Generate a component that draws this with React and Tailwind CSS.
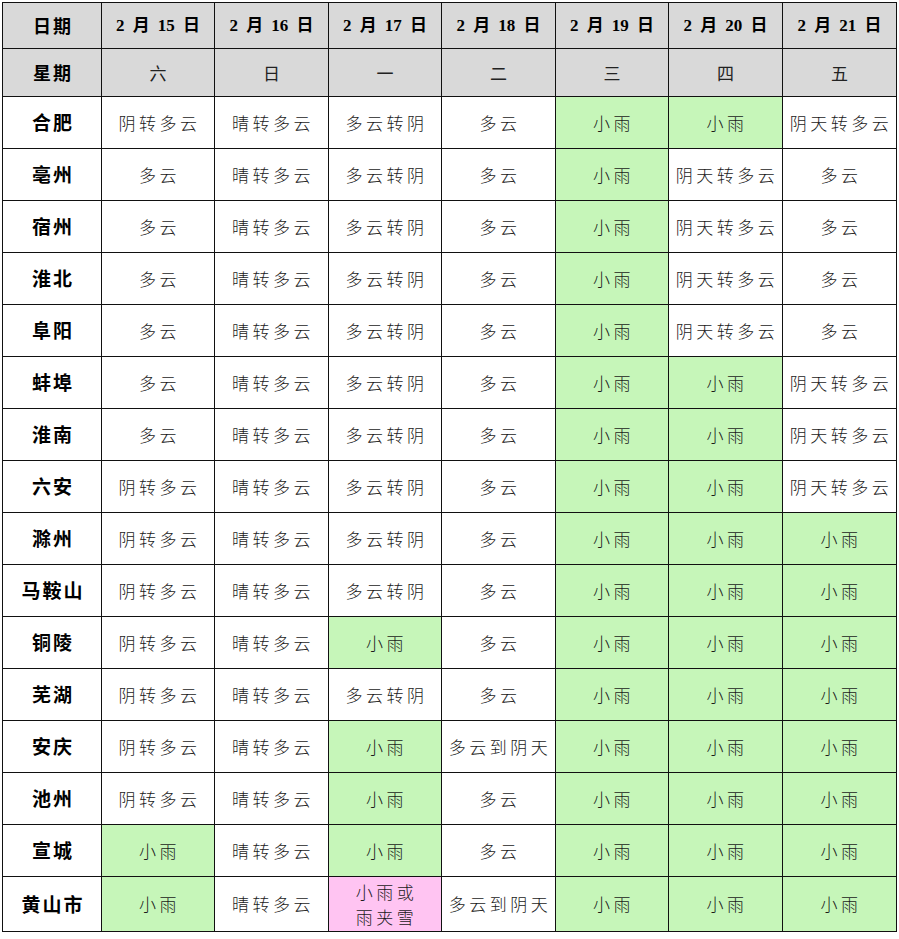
import React from "react";

const G = "g";
const P = "p";
const rows = [
  ["合肥", "阴转多云", "晴转多云", "多云转阴", "多云", ["小雨", G], ["小雨", G], "阴天转多云"],
  ["亳州", "多云", "晴转多云", "多云转阴", "多云", ["小雨", G], "阴天转多云", "多云"],
  ["宿州", "多云", "晴转多云", "多云转阴", "多云", ["小雨", G], "阴天转多云", "多云"],
  ["淮北", "多云", "晴转多云", "多云转阴", "多云", ["小雨", G], "阴天转多云", "多云"],
  ["阜阳", "多云", "晴转多云", "多云转阴", "多云", ["小雨", G], "阴天转多云", "多云"],
  ["蚌埠", "多云", "晴转多云", "多云转阴", "多云", ["小雨", G], ["小雨", G], "阴天转多云"],
  ["淮南", "多云", "晴转多云", "多云转阴", "多云", ["小雨", G], ["小雨", G], "阴天转多云"],
  ["六安", "阴转多云", "晴转多云", "多云转阴", "多云", ["小雨", G], ["小雨", G], "阴天转多云"],
  ["滁州", "阴转多云", "晴转多云", "多云转阴", "多云", ["小雨", G], ["小雨", G], ["小雨", G]],
  ["马鞍山", "阴转多云", "晴转多云", "多云转阴", "多云", ["小雨", G], ["小雨", G], ["小雨", G]],
  ["铜陵", "阴转多云", "晴转多云", ["小雨", G], "多云", ["小雨", G], ["小雨", G], ["小雨", G]],
  ["芜湖", "阴转多云", "晴转多云", "多云转阴", "多云", ["小雨", G], ["小雨", G], ["小雨", G]],
  ["安庆", "阴转多云", "晴转多云", ["小雨", G], "多云到阴天", ["小雨", G], ["小雨", G], ["小雨", G]],
  ["池州", "阴转多云", "晴转多云", ["小雨", G], "多云", ["小雨", G], ["小雨", G], ["小雨", G]],
  ["宣城", ["小雨", G], "晴转多云", ["小雨", G], "多云", ["小雨", G], ["小雨", G], ["小雨", G]],
  ["黄山市", ["小雨", G], "晴转多云", [["小雨或", "雨夹雪"], P], "多云到阴天", ["小雨", G], ["小雨", G], ["小雨", G]],
];

const dates = ["2 月 15 日", "2 月 16 日", "2 月 17 日", "2 月 18 日", "2 月 19 日", "2 月 20 日", "2 月 21 日"];
const days = ["六", "日", "一", "二", "三", "四", "五"];

const serif = { fontFamily: '"Liberation Serif", "Noto Sans CJK SC", serif' };
const sans = { fontFamily: '"Noto Sans CJK SC", sans-serif' };

export default function App() {
  return (
    <div className="bg-white w-[899px] h-[939px] pt-[2px] pl-[2px]">
      <table className="border-collapse table-fixed w-[894px] text-black" style={serif}>
        <colgroup>
          <col className="w-[99px]" />
          <col className="w-[113px]" />
          <col className="w-[114px]" />
          <col className="w-[113px]" />
          <col className="w-[114px]" />
          <col className="w-[113px]" />
          <col className="w-[114px]" />
          <col className="w-[114px]" />
        </colgroup>
        <tbody>
          <tr className="h-[46px] bg-[#d9d9d9]">
            <td className="border border-[#111] text-center font-bold text-[18px] tracking-[2px] pl-[2px]" style={sans}>日期</td>
            {dates.map((d) => (
              <td key={d} className="border border-[#111] text-center font-bold text-[17px] whitespace-pre [word-spacing:4px]" style={serif}>
                {d}
              </td>
            ))}
          </tr>
          <tr className="h-[48px] bg-[#d9d9d9]">
            <td className="border border-[#111] text-center font-bold text-[18px] tracking-[2px] pl-[2px]" style={sans}>星期</td>
            {days.map((d) => (
              <td key={d} className="border border-[#111] text-center text-[17px] text-[#222]" style={sans}>
                {d}
              </td>
            ))}
          </tr>
          {rows.map((r, i) => (
            <tr key={i} className={i === rows.length - 1 ? "h-[55px]" : "h-[52px]"}>
              <td className="border border-[#111] text-center font-bold text-[19px] tracking-[2px] pl-[2px]" style={sans}>
                {r[0]}
              </td>
              {r.slice(1).map((c, j) => {
                const text = Array.isArray(c) ? c[0] : c;
                const kind = Array.isArray(c) ? c[1] : null;
                const bg = kind === G ? "bg-[#c6f6b9]" : kind === P ? "bg-[#ffc4f2]" : "bg-white";
                return (
                  <td
                    key={j}
                    className={`border border-[#111] text-center font-light text-[17px] tracking-[3.5px] pl-[3px] text-[#1a1a1a] whitespace-nowrap ${bg}`}
                    style={sans}
                  >
                    {Array.isArray(text) ? (
                      <div className="flex flex-col leading-[25px]">
                        {text.map((t) => (
                          <span key={t}>{t}</span>
                        ))}
                      </div>
                    ) : (
                      text
                    )}
                  </td>
                );
              })}
            </tr>
          ))}
        </tbody>
      </table>
    </div>
  );
}
